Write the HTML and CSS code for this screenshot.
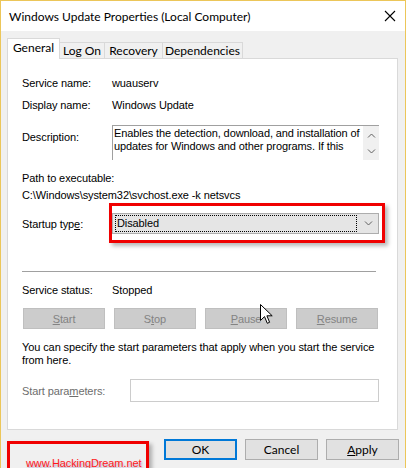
FILE: index.html
```html
<!DOCTYPE html>
<html lang="en">
<head>
<meta charset="utf-8">
<title>Windows Update Properties (Local Computer)</title>
<link rel="stylesheet" href="styles.css">
</head>
<body>
<div class="window">
  <header class="titlebar">
    <span class="title">Windows Update Properties (Local Computer)</span>
    <svg class="close" width="12" height="12" viewBox="0 0 12 12"><path d="M1 1L11 11M11 1L1 11" stroke="#000" stroke-width="1.1" fill="none"/></svg>
  </header>

  <div class="client">
    <nav class="tabs">
      <span class="tab active">General</span>
      <span class="tab w-logon">Log On</span>
      <span class="tab w-recovery">Recovery</span>
      <span class="tab w-deps">Dependencies</span>
    </nav>

    <section class="panel">
      <div class="row first">
        <span class="label">Service name:</span>
        <span>wuauserv</span>
      </div>
      <div class="row gap6">
        <span class="label">Display name:</span>
        <span>Windows Update</span>
      </div>
      <div class="row desc-row">
        <span class="label desc-label">Description:</span>
        <div class="textbox">
          <p class="textbox-text">Enables the detection, download, and installation of<br>updates for Windows and other programs. If this</p>
          <div class="scrollbar">
            <svg width="9" height="5" viewBox="0 0 9 5"><path d="M1 4.5L4.5 1L8 4.5" stroke="#606060" fill="none"/></svg>
            <svg width="9" height="5" viewBox="0 0 9 5"><path d="M1 0.5L4.5 4L8 0.5" stroke="#606060" fill="none"/></svg>
          </div>
        </div>
      </div>
      <div class="row path-label">Path to executable:</div>
      <div class="row path-value">C:\Windows\system32\svchost.exe -k netsvcs</div>
      <div class="row startup-row">
        <span class="label">Startup typ<u>e</u>:</span>
        <div class="combo-wrap">
          <div class="combo">
            <span class="combo-value">Disabled</span>
            <svg class="chev" width="9" height="5" viewBox="0 0 9 5"><path d="M1 0.5L4.5 4L8 0.5" stroke="#606060" fill="none"/></svg>
          </div>
          <div class="highlight"></div>
        </div>
      </div>
      <hr class="sep">
      <div class="row status-row">
        <span class="label">Service status:</span>
        <span>Stopped</span>
      </div>
      <div class="btn-grid">
        <button class="btn disabled"><u>S</u>tart</button>
        <button class="btn disabled">S<u>t</u>op</button>
        <button class="btn disabled"><u>P</u>ause</button>
        <button class="btn disabled"><u>R</u>esume</button>
      </div>
      <p class="note">You can specify the start parameters that apply when you start the service from here.</p>
      <div class="row params-row">
        <span class="label params-label">Start para<u>m</u>eters:</span>
        <div class="input"></div>
      </div>
    </section>

    <footer class="footer">
      <div class="watermark"><span>www.HackingDream.net</span></div>
      <div class="actions">
        <button class="dlg-btn default">OK</button>
        <button class="dlg-btn">Cancel</button>
        <button class="dlg-btn"><u>A</u>pply</button>
      </div>
    </footer>
  </div>

  <svg class="cursor" width="13" height="21" viewBox="0 0 13 21"><path d="M0.5 0.5V16.5L4.5 12.6L7.3 19.3L9.6 18.3L6.9 11.8H12.2Z" fill="#fff" stroke="#000" stroke-width="1" stroke-linejoin="miter"/></svg>
</div>
</body>
</html>
```

FILE: styles.css
```css
* { box-sizing: border-box; }

html, body {
  margin: 0;
  padding: 0;
  width: 406px;
  height: 468px;
  overflow: hidden;
  background: #f0f0f0;
}

body {
  font-family: "Liberation Sans", Arial, sans-serif;
  font-size: 11px;
  letter-spacing: -0.1px;
  color: #000;
}

u { text-decoration: underline; text-underline-offset: 1px; }

.window {
  position: relative;
  width: 406px;
  height: 468px;
  border: 1px solid #ecc659;
  border-bottom: none;
  background: #f0f0f0;
}

/* ---- title bar ---- */
.titlebar {
  height: 30px;
  background: #fff;
  display: flex;
  align-items: center;
  justify-content: space-between;
  padding: 0 9px 0 8px;
}
.title {
  font-family: Lato, "Noto Sans", sans-serif;
  font-size: 12px;
  letter-spacing: 0;
  color: #000;
  margin-top: 1px;
}

/* ---- tabs ---- */
.client { display: flex; flex-direction: column; }

.tabs {
  display: flex;
  align-items: flex-end;
  padding-left: 6px;
  margin-top: 7px;
  height: 20px;
}
.tab {
  height: 16px;
  border: 1px solid #d9d9d9;
  border-bottom: none;
  background: #f0f0f0;
  margin-left: -1px;
  font-family: Lato, "Noto Sans", sans-serif;
  font-size: 12px;
  letter-spacing: 0;
  line-height: 16px;
  text-align: center;
  white-space: nowrap;
}
.tab.active {
  margin-left: 0;
  width: 53px;
  height: 21px;
  margin-bottom: -1px;
  background: #fff;
  position: relative;
  z-index: 1;
  line-height: 17px;
}
.w-logon { width: 46px; }
.w-recovery { width: 59px; }
.w-deps { width: 81px; }

/* ---- general page ---- */
.panel {
  margin: 0 7px 0 6px;
  height: 372px;
  background: #fff;
  border: 1px solid #d9d9d9;
  padding: 16px 0 0 14px;
}

.row {
  display: flex;
  align-items: center;
  height: 16px;
  line-height: 16px;
  white-space: nowrap;
}
.label { width: 90px; flex: none; }
.gap6 { margin-top: 6px; }

.desc-row {
  margin-top: 12px;
  height: 35px;
  align-items: flex-start;
}
.desc-label { margin-top: 4px; }
.textbox {
  width: 267px;
  height: 35px;
  border-top: 1px solid #a0a0a0;
  border-left: 1px solid #a0a0a0;
  display: flex;
  background: #fff;
}
.textbox-text {
  margin: 0;
  flex: 1;
  padding: 1px 0 0 1px;
  line-height: 13px;
  white-space: nowrap;
  overflow: hidden;
}
.scrollbar {
  width: 16px;
  flex: none;
  background: #f0f0f0;
  display: flex;
  flex-direction: column;
  align-items: center;
  justify-content: space-between;
  padding: 7px 0 6px;
}

.path-label { margin-top: 10px; }
.path-value { margin-top: 1px; }

.startup-row { margin-top: 10px; height: 21px; }
.combo-wrap { position: relative; }
.combo {
  width: 267px;
  height: 21px;
  background: #e5e5e5;
  border: 1px solid #adadad;
  display: flex;
  align-items: center;
  padding: 0 5px 0 2px;
}
.combo-value {
  flex: 1;
  height: 17px;
  line-height: 15px;
  border: 1px dotted #000;
  padding-left: 1px;
  margin-right: 7px;
}
.chev { flex: none; }
.highlight {
  position: absolute;
  left: -3px;
  top: -10px;
  width: 276px;
  height: 40px;
  border: 3px solid #f00000;
  box-shadow: 3px 3px 4px rgba(0, 0, 0, 0.28);
  pointer-events: none;
}

.sep {
  margin: 37px 0 0 0;
  width: 354px;
  border: none;
  height: 1px;
  background: #a0a0a0;
}

.status-row { margin-top: 10px; }

.btn-grid {
  margin: 10px 0 0 1px;
  width: 355px;
  display: grid;
  grid-template-columns: repeat(4, 1fr);
  column-gap: 9px;
}
.btn {
  height: 21px;
  font-family: inherit;
  font-size: 11px;
  letter-spacing: inherit;
  padding: 0;
}
.btn.disabled {
  background: #cccccc;
  border: 1px solid #bfbfbf;
  color: #838383;
}

.note {
  margin: 12px 0 0 0;
  width: 360px;
  line-height: 13px;
}

.params-row { margin-top: 12px; height: 23px; }
.params-label { width: 108px; color: #6d6d6d; }
.input {
  width: 249px;
  height: 23px;
  border: 1px solid #cccccc;
  background: #fff;
}

/* ---- dialog footer ---- */
.footer {
  display: flex;
  justify-content: space-between;
  padding: 0 6px 0 6px;
  margin-top: 9px;
}
.watermark {
  margin-top: 2px;
  width: 142px;
  height: 40px;
  border: 3px solid #f00000;
  box-shadow: 3px 3px 4px rgba(0, 0, 0, 0.28);
  padding: 13px 0 0 16px;
}
.watermark span {
  font-size: 11px;
  color: #ff1a1a;
  text-shadow: 1px 2px 2px rgba(120, 80, 150, 0.45);
  white-space: nowrap;
}
.actions { display: flex; gap: 8px; }
.dlg-btn {
  width: 73px;
  height: 21px;
  background: #e1e1e1;
  border: 1px solid #adadad;
  font-family: Lato, "Noto Sans", sans-serif;
  font-size: 12px;
  letter-spacing: 0;
  color: #000;
  padding: 0;
  line-height: 17px;
}
.dlg-btn.default { border: 2px solid #0078d7; }

/* mouse pointer resting over the Pause button */
.cursor {
  position: absolute;
  left: 259px;
  top: 303px;
}
```
